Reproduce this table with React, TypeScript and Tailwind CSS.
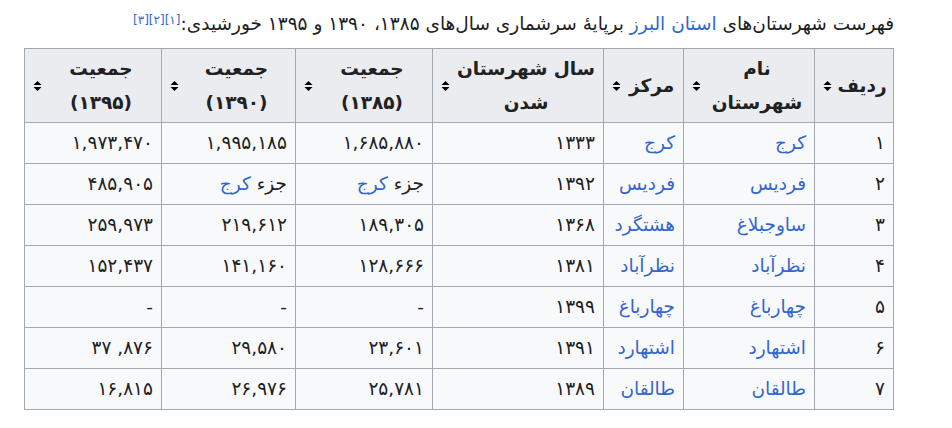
import { ReactNode } from 'react'

interface Row {
  id: string
  name: string
  center: string
  year: string
  p85: ReactNode
  p90: ReactNode
  p95: ReactNode
}

const Link = ({ children }: { children: ReactNode }) => (
  <span className="text-[#3366cc]">{children}</span>
)

const partOfKaraj = (
  <>
    جزء <Link>کرج</Link>
  </>
)

const rows: Row[] = [
  { id: '۱', name: 'کرج', center: 'کرج', year: '۱۳۳۳', p85: '۱,۶۸۵,۸۸۰', p90: '۱,۹۹۵,۱۸۵', p95: '۱,۹۷۳,۴۷۰' },
  { id: '۲', name: 'فردیس', center: 'فردیس', year: '۱۳۹۲', p85: partOfKaraj, p90: partOfKaraj, p95: '۴۸۵,۹۰۵' },
  { id: '۳', name: 'ساوجبلاغ', center: 'هشتگرد', year: '۱۳۶۸', p85: '۱۸۹,۳۰۵', p90: '۲۱۹,۶۱۲', p95: '۲۵۹,۹۷۳' },
  { id: '۴', name: 'نظرآباد', center: 'نظرآباد', year: '۱۳۸۱', p85: '۱۲۸,۶۶۶', p90: '۱۴۱,۱۶۰', p95: '۱۵۲,۴۳۷' },
  { id: '۵', name: 'چهارباغ', center: 'چهارباغ', year: '۱۳۹۹', p85: '-', p90: '-', p95: '-' },
  {
    id: '۶',
    name: 'اشتهارد',
    center: 'اشتهارد',
    year: '۱۳۹۱',
    p85: '۲۳,۶۰۱',
    p90: '۲۹,۵۸۰',
    p95: <span dir="ltr">۳۷ ,۸۷۶</span>,
  },
  { id: '۷', name: 'طالقان', center: 'طالقان', year: '۱۳۸۹', p85: '۲۵,۷۸۱', p90: '۲۶,۹۷۶', p95: '۱۶,۸۱۵' },
]

function SortIcon() {
  return (
    <svg
      className="absolute left-[8px] top-1/2 -translate-y-1/2"
      width="9"
      height="11"
      viewBox="0 0 9 11"
    >
      <path d="M4.5 0.5 L8.5 4.5 L0.5 4.5 Z" fill="#000" />
      <path d="M0.5 6.5 L8.5 6.5 L4.5 10.5 Z" fill="#000" />
    </svg>
  )
}

function Th({ children }: { children: ReactNode }) {
  return (
    <th className="relative border border-[#a2a9b1] bg-[#eaecf0] pl-[22px] pr-[6px] text-center align-middle font-bold leading-[34px]">
      {children}
      <SortIcon />
    </th>
  )
}

function Td({ children }: { children: ReactNode }) {
  return (
    <td className="border border-[#a2a9b1] px-[8px] text-right align-middle whitespace-nowrap">
      {children}
    </td>
  )
}

export default function App() {
  return (
    <div
      dir="rtl"
      className="w-[952px] h-[428px] bg-white pr-[58px] pl-[25px] pt-[9px] text-[#202122] text-[18.5px] font-['DejaVu_Sans',sans-serif]"
    >
      <p className="h-[39px] leading-[30px] text-[18.5px]">
        فهرست شهرستان‌های <Link>استان البرز</Link> برپایهٔ سرشماری سال‌های ۱۳۸۵، ۱۳۹۰ و ۱۳۹۵
        خورشیدی:
        <sup className="text-[12px] text-[#3366cc]">[۱][۲][۳]</sup>
      </p>
      <table className="w-[869px] table-fixed border-collapse bg-[#f8f9fa]">
        <colgroup>
          <col className="w-[79px]" />
          <col className="w-[131px]" />
          <col className="w-[80px]" />
          <col className="w-[171px]" />
          <col className="w-[137px]" />
          <col className="w-[134px]" />
          <col className="w-[137px]" />
        </colgroup>
        <thead>
          <tr className="h-[74px]">
            <Th>ردیف</Th>
            <Th>
              نام
              <br />
              شهرستان
            </Th>
            <Th>مرکز</Th>
            <Th>
              سال شهرستان
              <br />
              شدن
            </Th>
            <Th>
              جمعیت
              <br />
              (۱۳۸۵)
            </Th>
            <Th>
              جمعیت
              <br />
              (۱۳۹۰)
            </Th>
            <Th>
              جمعیت
              <br />
              (۱۳۹۵)
            </Th>
          </tr>
        </thead>
        <tbody>
          {rows.map(row => (
            <tr key={row.id} className="h-[41px]">
              <Td>{row.id}</Td>
              <Td>
                <Link>{row.name}</Link>
              </Td>
              <Td>
                <Link>{row.center}</Link>
              </Td>
              <Td>{row.year}</Td>
              <Td>{row.p85}</Td>
              <Td>{row.p90}</Td>
              <Td>{row.p95}</Td>
            </tr>
          ))}
        </tbody>
      </table>
    </div>
  )
}
